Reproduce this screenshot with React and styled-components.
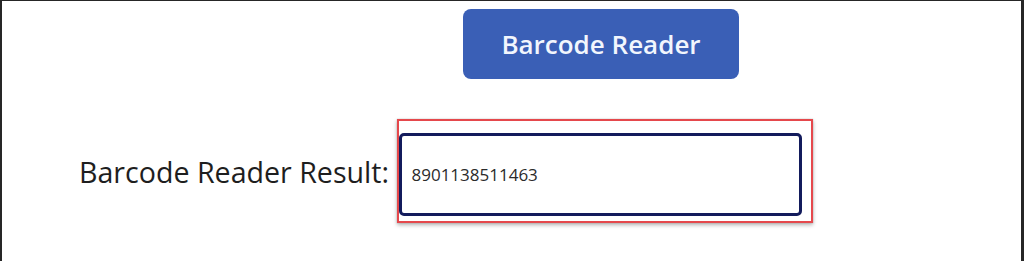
import React from "react";
import styled, { createGlobalStyle } from "styled-components";

const Global = createGlobalStyle`
  html, body { margin: 0; padding: 0; background: #ffffff; }
  body { font-family: "Open Sans", "Liberation Sans", sans-serif; }
`;

const Frame = styled.div`
  box-sizing: border-box;
  width: 1024px;
  height: 261px;
  border-top: 1px solid #262626;
  border-left: 2px solid #262626;
  border-right: 3px solid #262626;
  background: #ffffff;
  display: flex;
  flex-direction: column;
`;

const ButtonRow = styled.div`
  display: flex;
  padding: 8px 0 0 461px;
`;

const PrimaryButton = styled.button`
  width: 276px;
  height: 70px;
  border: none;
  border-radius: 8px;
  background: #3a5fb6;
  color: #f2f6fd;
  font-family: "Open Sans", "Liberation Sans", sans-serif;
  font-weight: 600;
  font-size: 26px;
  cursor: pointer;
  padding: 0;
`;

const ResultRow = styled.div`
  display: flex;
  align-items: center;
  gap: 8px;
  margin-top: 40px;
  padding-left: 77px;
`;

const Label = styled.span`
  font-size: 28.6px;
  color: #1e1e1e;
  white-space: nowrap;
`;

const Highlight = styled.div`
  box-sizing: border-box;
  width: 416px;
  height: 104px;
  border: 2.5px solid #e5484c;
  padding: 11.5px 8.5px 5.5px 0.5px;
  box-shadow: 0 2px 4px rgba(0, 0, 0, 0.3), 0 0 1px rgba(0, 0, 0, 0.25);
  display: flex;
`;

const Field = styled.div`
  box-sizing: border-box;
  flex: 1;
  border: 3px solid #131b5c;
  border-radius: 5px;
  display: flex;
  align-items: center;
  padding-left: 9px;
  font-size: 17px;
  color: #2b2b2b;
`;

export default function App() {
  return (
    <>
      <Global />
      <Frame>
        <ButtonRow>
          <PrimaryButton>Barcode Reader</PrimaryButton>
        </ButtonRow>
        <ResultRow>
          <Label>Barcode Reader Result:</Label>
          <Highlight>
            <Field>8901138511463</Field>
          </Highlight>
        </ResultRow>
      </Frame>
    </>
  );
}
